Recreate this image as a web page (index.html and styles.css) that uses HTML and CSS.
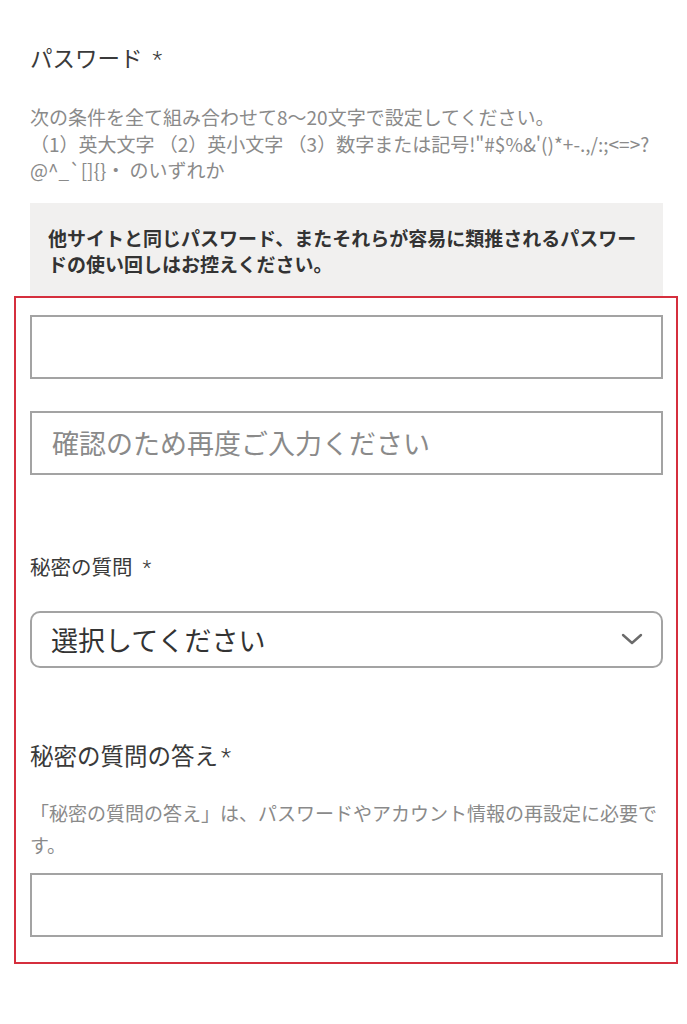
FILE: index.html
```html
<!DOCTYPE html>
<html lang="ja">
<head>
<meta charset="utf-8">
<title>パスワード</title>
<link rel="stylesheet" href="styles.css">
</head>
<body>
<main class="page">
  <h2 class="label label-first">パスワード<span class="ast ast-wide">*</span></h2>
  <p class="desc">次の条件を全て組み合わせて8〜20文字で設定してください。<br>（1）英大文字 （2）英小文字 （3）数字または記号!"#$%&amp;'()*+-.,/:;&lt;=&gt;?<br>@^_`[]{}・ のいずれか</p>
  <div class="notice">他サイトと同じパスワード、またそれらが容易に類推されるパスワードの使い回しはお控えください。</div>
  <div class="highlight">
    <input class="field" type="password" aria-label="パスワード">
    <input class="field field-gap" type="password" placeholder="確認のため再度ご入力ください">
    <h2 class="label label-q">秘密の質問<span class="ast ast-wide">*</span></h2>
    <div class="select">
      <span class="select-text">選択してください</span>
      <svg class="chev" width="22" height="12" viewBox="0 0 22 12"><path d="M2 2 L11 10 L20 2" fill="none" stroke="#6b6b6b" stroke-width="2.4" stroke-linecap="round" stroke-linejoin="round"/></svg>
    </div>
    <h2 class="label label-a">秘密の質問の答え<span class="ast">*</span></h2>
    <p class="note">「秘密の質問の答え」は、パスワードやアカウント情報の再設定に必要です。</p>
    <input class="field field-ans" type="text" aria-label="秘密の質問の答え">
  </div>
</main>
</body>
</html>
```
FILE: styles.css
```css
html, body {
  margin: 0;
  padding: 0;
  background: #ffffff;
}
body {
  font-family: "Noto Sans CJK JP", "Roboto", "Noto Sans", sans-serif;
  color: #333333;
}
.page {
  padding: 42px 24px 40px 30px;
}
.label {
  margin: 0;
  height: 30px;
  font-size: 22.5px;
  line-height: 30px;
  font-weight: 400;
  color: #3a3a3a;
}
.ast {
  font-family: "Roboto", "Liberation Sans", sans-serif;
  font-weight: 300;
  font-size: 1em;
  line-height: 0;
  margin-left: 3px;
}
.ast-wide {
  margin-left: 10px;
}
.desc {
  margin: 32px 0 0;
  font-size: 19px;
  line-height: 26.5px;
  color: #8a8a8a;
}
.notice {
  margin-top: 19px;
  background: #f1f0ef;
  padding: 22px 18px 19px 18px;
  font-size: 19px;
  line-height: 26px;
  font-weight: 700;
  color: #333333;
}
.highlight {
  margin: 0 -15px 0 -16px;
  border: 2px solid #d52f3d;
  padding: 17px 13px 25px 14px;
}
.field {
  display: block;
  box-sizing: border-box;
  width: 100%;
  height: 64px;
  margin: 0;
  border: 2px solid #a3a3a3;
  border-radius: 0;
  background: #ffffff;
  padding: 0 20px;
  font-family: inherit;
  font-size: 27px;
  color: #333333;
  outline: none;
}
.field::placeholder {
  color: #8a8a8a;
}
.field-gap {
  margin-top: 32px;
}
.label-q {
  margin-top: 76px;
  font-size: 20.5px;
}
.select {
  margin-top: 30px;
  box-sizing: border-box;
  height: 57px;
  border: 2px solid #a3a3a3;
  border-radius: 10px;
  display: flex;
  align-items: center;
  justify-content: space-between;
  padding: 0 18px 0 19px;
}
.select-text {
  font-size: 27px;
  color: #333333;
}
.chev {
  display: block;
}
.label-a {
  margin-top: 72px;
  font-size: 23.5px;
}
.note {
  margin: 27px 0 0;
  font-size: 19px;
  line-height: 32px;
  color: #8a8a8a;
}
.field-ans {
  margin-top: 12px;
}
```
